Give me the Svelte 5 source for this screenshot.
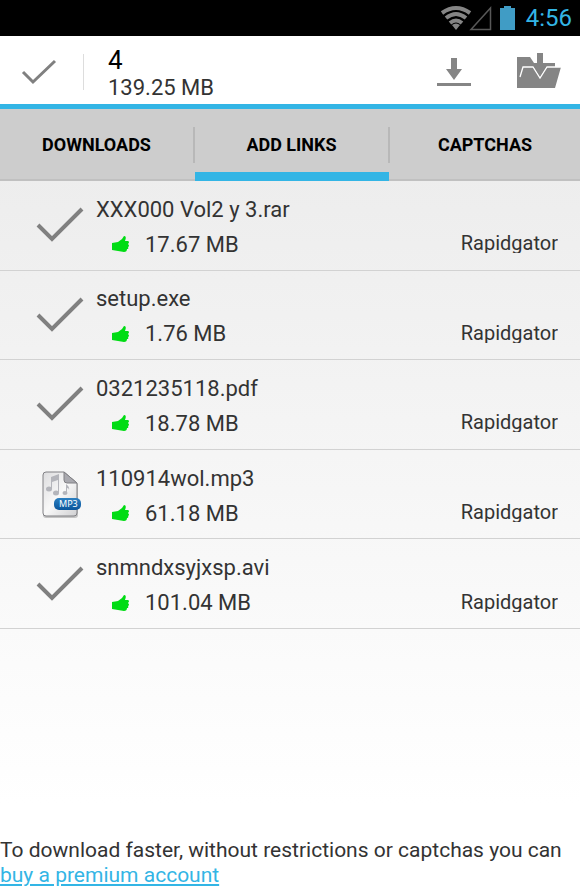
<script lang="ts">
	interface Link {
		name: string;
		size: string;
		host: string;
		audio?: boolean;
	}

	const tabs = ['Downloads', 'Add links', 'Captchas'];
	let active = $state(1);

	const links: Link[] = [
		{ name: 'XXX000 Vol2 y 3.rar', size: '17.67 MB', host: 'Rapidgator' },
		{ name: 'setup.exe', size: '1.76 MB', host: 'Rapidgator' },
		{ name: '0321235118.pdf', size: '18.78 MB', host: 'Rapidgator' },
		{ name: '110914wol.mp3', size: '61.18 MB', host: 'Rapidgator', audio: true },
		{ name: 'snmndxsyjxsp.avi', size: '101.04 MB', host: 'Rapidgator' }
	];
</script>

<style>
	:global(body) {
		margin: 0;
	}
	.page {
		display: flex;
		flex-direction: column;
		min-height: 100vh;
		font-family: Roboto, 'Liberation Sans', sans-serif;
		font-size: 22px;
		line-height: 25px;
		color: #333;
		background: linear-gradient(#e8e8e8, #fff 90%);
	}
	svg {
		display: block;
		flex: none;
	}
	button {
		border: 0;
		padding: 0;
		background: none;
		font: inherit;
		color: inherit;
		cursor: pointer;
	}
	.status {
		display: flex;
		justify-content: flex-end;
		align-items: center;
		height: 36px;
		padding-right: 8px;
		background: #000;
		color: #33b5e5;
		font-size: 24px;
	}
	.status svg {
		margin-right: 8px;
	}
	.actions {
		display: flex;
		align-items: center;
		box-sizing: border-box;
		height: 73px;
		padding: 4px 18px 0 21px;
		background: #fff;
		border-bottom: 5px solid #33b5e5;
	}
	.summary {
		flex: 1;
		margin-left: 26px;
		display: flex;
		align-items: center;
	}
	.summary::before {
		content: '';
		width: 1px;
		height: 36px;
		margin-right: 24px;
		background: #ddd;
	}
	.count {
		display: block;
		font-size: 26px;
		line-height: 30px;
		color: #000;
	}
	.total {
		display: block;
	}
	.actions button + button {
		margin-left: 44px;
	}
	.tabs {
		display: grid;
		grid-template-columns: 195fr 195fr 190fr;
		background: #cdcdcd;
		box-shadow: inset 0 -2px #c0c0c0;
	}
	.tabs button {
		display: flex;
		align-items: center;
		height: 72px;
		font-size: 18px;
		font-weight: 700;
		text-transform: uppercase;
		color: #000;
	}
	.tabs span {
		flex: 1;
		line-height: 36px;
	}
	.tabs button:not(:last-child) span {
		border-right: 2px solid #b8b8b8;
	}
	.tabs .active {
		background: linear-gradient(#33b5e5, #33b5e5) left bottom / calc(100% - 1px) 9px no-repeat;
	}
	ul {
		display: grid;
		grid-auto-rows: 1fr;
		min-height: 448px;
		margin: 0;
		padding: 0;
		list-style: none;
	}
	li {
		display: flex;
		align-items: center;
		border-bottom: 1px solid #d2d2d2;
		padding: 0 22px 0 36px;
	}
	.info {
		flex: 1;
		margin-left: 12px;
		padding-top: 3px;
	}
	.name {
		display: block;
		margin-bottom: 10px;
	}
	.detail {
		display: flex;
		align-items: center;
	}
	.detail svg {
		margin: 0 15px;
	}
	.host {
		margin-left: auto;
		margin-bottom: 2px;
		font-size: 20px;
		line-height: 20px;
		overflow: hidden;
	}
	footer {
		margin-top: auto;
		padding-bottom: 5px;
		font-size: 21px;
	}
	footer a {
		display: block;
		color: #33b5e5;
	}
</style>

<div class="page">
	<div class="status">
		<svg width="78" height="26" viewBox="0 0 78 26">
			<g fill="none" stroke="#858585" stroke-width="4">
				<path d="M2 8Q16 -2 30 8" />
				<path d="M6 13Q16 5 26 13" />
				<path d="M10 18Q16 13 22 18" />
			</g>
			<path d="M12 20Q16 17 20 20L16 25Z" fill="#858585" />
			<path d="M31 24.500L50.500 3V24.500Z" fill="none" stroke="#585858" stroke-width="1.500" />
			<path d="M60 3H64V1H71V3H75V25H60Z" fill="#409cc5" />
		</svg>
		<span>4:56</span>
	</div>

	<header class="actions">
		<button aria-label="Done">
			<svg width="36" height="28" viewBox="0 0 36 28">
				<path d="M2 14L12 24L34 3" fill="none" stroke="#808080" stroke-width="3" />
			</svg>
		</button>
		<div class="summary">
			<div>
				<span class="count">4</span>
				<span class="total">139.25 MB</span>
			</div>
		</div>
		<button aria-label="Download">
			<svg width="36" height="36" viewBox="0 0 36 36" fill="#858585">
				<path d="M15 4H21V15H26L18 26L10 15H15ZM1 29H35V32H1Z" />
			</svg>
		</button>
		<button aria-label="Import from folder">
			<svg width="46" height="38" viewBox="0 0 46 38" fill="#858585">
				<path d="M1 4H14L18 10H39V14H45L39 35H1Z" />
				<path d="M4 24L7 14H17L24 25L31 14H45" fill="none" stroke="#fff" stroke-width="1.300" />
				<path d="M21 0H27V12H31L24 23L17 12H21Z" />
			</svg>
		</button>
	</header>

	<nav class="tabs">
		{#each tabs as tab, i}
			<button class:active={active === i} onclick={() => (active = i)}><span>{tab}</span></button>
		{/each}
	</nav>

	<ul>
		{#each links as link}
			<li>
				{#if link.audio}
					<svg width="48" height="50" viewBox="0 0 48 50">
						<defs>
							<linearGradient id="paper" x2="1" y2="1">
								<stop offset="0" stop-color="#dcdcde" />
								<stop offset=".5" stop-color="#f8f8f8" />
								<stop offset="1" stop-color="#d0d0d2" />
							</linearGradient>
							<linearGradient id="pill" x2="0" y2="1">
								<stop offset="0" stop-color="#2c7fc0" />
								<stop offset="1" stop-color="#0a559c" />
							</linearGradient>
						</defs>
						<path d="M10 4H29L42 15V46Q42 49 39 49H10Q7 49 7 46V7Q7 4 10 4Z" fill="#c4c4c4" />
						<path d="M10 3H28L41 14V44Q41 47 38 47H10Q7 47 7 44V6Q7 3 10 3Z" fill="url(#paper)" stroke="#808084" />
						<path d="M28 3L41 14H31Q28 14 28 11Z" fill="#a9a9af" stroke="#808084" />
						<g fill="#b4b5bb">
							<ellipse cx="13" cy="20" rx="3" ry="2.500" />
							<ellipse cx="20" cy="24" rx="3" ry="2.500" />
							<ellipse cx="29" cy="24" rx="2.500" ry="2" />
							<path d="M15 20V8L23 5V24H22V11L16 13V20ZM15 10L23 7V10L15 13Z" />
							<path d="M30 24V15Q34 18 33 21Q33 19 31 19V24Z" />
						</g>
						<rect x="18" y="29" width="27" height="12" rx="5" fill="url(#pill)" />
						<text x="23" y="38" font-family="'Noto Sans', sans-serif" font-size="9" fill="#fff">MP3</text>
					</svg>
				{:else}
					<svg width="48" height="38" viewBox="0 0 48 38">
						<path d="M2 19L16 33L46 3" fill="none" stroke="#808080" stroke-width="4" />
					</svg>
				{/if}
				<div class="info">
					<span class="name">{link.name}</span>
					<div class="detail">
						<svg width="19" height="18" viewBox="0 0 19 18">
							<path d="M1 8L7 7L11 4L13 1Q16 1 14 6H17Q19 7 17 9Q19 11 17 12Q18 14 16 14Q16 17 13 17L1 15Z" fill="#00dc14" />
						</svg>
						<span>{link.size}</span>
						<span class="host">{link.host}</span>
					</div>
				</div>
			</li>
		{/each}
	</ul>

	<footer>
		To download faster, without restrictions or captchas you can
		<a href="#premium">buy a premium account</a>
	</footer>
</div>
